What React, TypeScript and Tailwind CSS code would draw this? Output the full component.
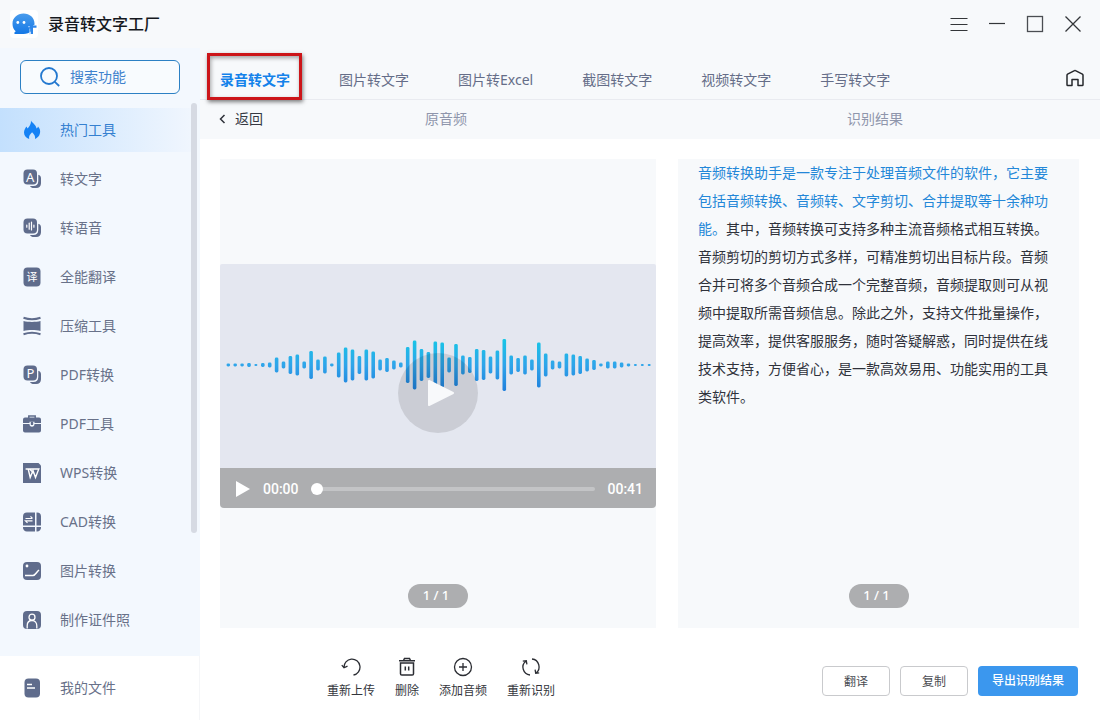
import type { ReactNode } from 'react';

const INK = '#5f6c8c';

const StackIcon = ({ children }: { children: ReactNode }) => (
  <svg width="20" height="20" viewBox="0 0 20 20" aria-hidden="true">
    <path
      d="M16.300 5.800c1.700.4 2.700 1.700 2.700 3.500v4.900c0 3-1.800 4.800-4.800 4.800h-2.400c-1.700 0-3-.7-3.800-2.100h3.300c3.200 0 5-1.800 5-5z"
      fill={INK}
    />
    <rect x="1.500" y="0.500" width="13.500" height="15" rx="4" fill={INK} />
    {children}
  </svg>
);

const FlameIcon = () => (
  <svg width="20" height="20" viewBox="0 0 20 20" aria-hidden="true">
    <path
      d="M9 .5c1 2.400 5.200 4.300 5.500 8 .8-.4 1.300-1 1.500-2C17.800 8.500 18.500 10.500 18 13c-.6 3.200-2.600 5-5 6 .7-2.800-1-5-2.900-6.800C8.200 14 6.400 16 7.200 19 4 18 2.100 15.800 2 12.600 2 9.700 3.400 8.300 4.400 6.500c.5.8.8 1.300 1 2.100C7.500 6.500 9.200 4 9 .5z"
      fill="#1582f5"
    />
  </svg>
);

const LetterAIcon = () => (
  <StackIcon>
    <text x="8.2" y="12.500" textAnchor="middle" fontSize="13" fill="#fff">A</text>
  </StackIcon>
);

const VoiceIcon = () => (
  <StackIcon>
    <path d="M4.800 7v2.200M7.200 5v6.200M9.500 4v8M11.900 7v2.200" stroke="#fff" strokeWidth="1.200" strokeLinecap="round" />
  </StackIcon>
);

const LetterPIcon = () => (
  <StackIcon>
    <text x="8.5" y="12.500" textAnchor="middle" fontSize="13" fill="#fff">P</text>
  </StackIcon>
);

const TranslateIcon = () => (
  <svg width="20" height="20" viewBox="0 0 20 20" aria-hidden="true">
    <rect x="1.500" y="0.500" width="17" height="19" rx="4" fill={INK} />
    <text x="10" y="14" textAnchor="middle" fontSize="11" fill="#fff">译</text>
  </svg>
);

const CompressIcon = () => (
  <svg width="20" height="20" viewBox="0 0 20 20" aria-hidden="true">
    <path d="M1.500 1.800c5 1.700 12 1.700 17 0M1.500 18.200c5-1.700 12-1.700 17 0" fill="none" stroke={INK} strokeWidth="2" />
    <path d="M1.500 5c5 1.200 12 1.200 17 0v10c-5-1.200-12-1.200-17 0z" fill={INK} />
  </svg>
);

const BriefcaseIcon = () => (
  <svg width="20" height="20" viewBox="0 0 20 20" aria-hidden="true">
    <path d="M6.800 4V1.900h6.400V4" fill="none" stroke={INK} strokeWidth="1.500" />
    <path d="M1 5.500a2 2 0 0 1 2-2h14a2 2 0 0 1 2 2V9h-6.500V7.800h-5V9H1z" fill={INK} />
    <path d="M1 10h6.500c0 1.800 1 2.700 2.500 2.700s2.500-.9 2.500-2.700H19v6.500a2 2 0 0 1-2 2H3a2 2 0 0 1-2-2z" fill={INK} />
    <path d="M8.800 7.800h2.400v2.400c0 1.200-2.400 1.200-2.400 0z" fill={INK} />
  </svg>
);

const WpsIcon = () => (
  <svg width="20" height="20" viewBox="0 0 20 20" aria-hidden="true">
    <path d="M1 0h15.500L19 2.500V20H1z" fill={INK} />
    <path d="M3.600 6h2.600l2 8.500L11 7.500l2.500 7L16.800 6H7.500l4.200 4" fill="none" stroke="#fff" strokeWidth="1.400" />
  </svg>
);

const CadIcon = () => (
  <svg width="20" height="20" viewBox="0 0 20 20" aria-hidden="true">
    <path d="M5 .5h8v13H1v-9a4 4 0 0 1 4-4zM14.500.5h.5a4 4 0 0 1 4 4v9h-4.500zM1 15h12v4.500H5A4 4 0 0 1 1 15zM14.500 15H19a4 4 0 0 1-4 4.500h-.5z" fill={INK} />
    <path d="M3.500 6.500h7M8.500 4.300l2 2M10.500 8.800h-7l2 2" fill="none" stroke="#fff" strokeWidth="1.200" />
  </svg>
);

const PictureIcon = () => (
  <svg width="20" height="20" viewBox="0 0 20 20" aria-hidden="true">
    <rect x="1" y="1" width="18" height="18" rx="4" fill={INK} />
    <circle cx="5" cy="5" r="1.400" fill="#fff" />
    <path d="M3 14.500h8c2.500 0 3-3 6-5.500" fill="none" stroke="#fff" strokeWidth="1.500" />
  </svg>
);

const PortraitIcon = () => (
  <svg width="20" height="20" viewBox="0 0 20 20" aria-hidden="true">
    <rect x="1" y="1" width="18" height="18" rx="4" fill={INK} />
    <circle cx="10" cy="7.200" r="3" fill="none" stroke="#fff" strokeWidth="1.300" />
    <path d="M5.200 18.500v-2.700c0-3.200 2-5.300 4.800-5.300s4.800 2.100 4.800 5.300v2.700" fill="none" stroke="#fff" strokeWidth="1.300" />
  </svg>
);

const FileIcon = () => (
  <svg width="20" height="20" viewBox="0 0 20 20" aria-hidden="true">
    <rect x="2.500" y="0.500" width="15.500" height="19" rx="4" fill={INK} />
    <path d="M5 6.500h5M5 10h8" stroke="#fff" strokeWidth="1.400" />
  </svg>
);

const Logo = () => (
  <svg width="28" height="28" viewBox="0 0 28 28" aria-hidden="true">
    <defs>
      <linearGradient id="logo" x1="0" y1="0" x2="0" y2="1">
        <stop offset="0" stopColor="#4a9cec" />
        <stop offset="1" stopColor="#1478e6" />
      </linearGradient>
    </defs>
    <rect width="28" height="28" rx="4" fill="#fff" />
    <path d="M13.500 3.500c6.200 0 11 4.300 11 10 0 6-4.500 10.500-11 10.500H5.200c-.9 0-1.300-.9-.7-1.500l1.200-1.300C3.500 19.500 2.500 16.800 2.500 13.700 2.500 7.800 7.300 3.500 13.500 3.500z" fill="url(#logo)" />
    <circle cx="7.800" cy="12.500" r="1.400" fill="#fff" />
    <circle cx="14" cy="12.500" r="1.400" fill="#fff" />
    <path d="M23.500 15H28v4h-3v6h-4.500l1-6z" fill="#fff" />
    <path d="M18 15.500h8.500v2.300H23v6.300h-2.300v-6.300H18z" fill="#2d86ea" />
    <path d="M18 16.700h2M19.800 18.500v6" stroke="#b9dafb" strokeWidth="0.800" />
  </svg>
);

const tools = [
  { label: '热门工具', icon: FlameIcon },
  { label: '转文字', icon: LetterAIcon },
  { label: '转语音', icon: VoiceIcon },
  { label: '全能翻译', icon: TranslateIcon },
  { label: '压缩工具', icon: CompressIcon },
  { label: 'PDF转换', icon: LetterPIcon },
  { label: 'PDF工具', icon: BriefcaseIcon },
  { label: 'WPS转换', icon: WpsIcon },
  { label: 'CAD转换', icon: CadIcon },
  { label: '图片转换', icon: PictureIcon },
  { label: '制作证件照', icon: PortraitIcon },
];

const tabs = ['录音转文字', '图片转文字', '图片转Excel', '截图转文字', '视频转文字', '手写转文字'];

const bars = [
  3, 3, 3, 4, 2, 4, 5, 15, 7, 18, 21, 7, 28, 11, 17, 3, 25, 35, 31, 18, 31, 27, 11, 14, 9, 5, 36, 49, 32, 26, 47,
  45, 15, 42, 19, 16, 32, 30, 17, 29, 52, 19, 14, 19, 11, 45, 23, 9, 7, 23, 21, 18, 13, 10, 3, 7, 7, 5, 3, 2, 2, 2,
];

const Waveform = () => (
  <svg className="w-full" viewBox="0 0 436 60" aria-hidden="true">
    <defs>
      <linearGradient id="wave" gradientUnits="userSpaceOnUse" x1="0" y1="4" x2="0" y2="56">
        <stop offset="0" stopColor="#16c6e6" />
        <stop offset="0.5" stopColor="#2fa5ea" />
        <stop offset="1" stopColor="#1f7fdc" />
      </linearGradient>
    </defs>
    {bars.map((h, i) => {
      const w = Math.min(h + 1, 3.6);
      return <rect key={i} x={8.3 + i * 6.9 - w / 2} y={30 - h / 2} width={w} height={h} rx={w / 2.5} fill="url(#wave)" />;
    })}
  </svg>
);

const Sidebar = () => (
  <aside className="flex w-[200px] shrink-0 flex-col bg-[#f3f8fe]">
    <div className="px-5 pt-3">
      <label className="flex h-[34px] items-center gap-2.5 rounded-md border border-[#2c80c4] bg-[#f8fbfe] pl-[19px]">
        <svg className="shrink-0" width="20" height="20" viewBox="0 0 20 20" fill="none" stroke="#2478cf" strokeWidth="1.800" aria-hidden="true">
          <circle cx="9" cy="9" r="8" />
          <path d="M14.800 14.800l4.400 4.200" />
        </svg>
        <input
          type="text"
          aria-label="搜索功能"
          placeholder="搜索功能"
          className="w-full min-w-0 bg-transparent text-sm outline-none placeholder:text-[#3f82cd]"
        />
      </label>
    </div>

    <nav className="flex flex-1">
      <ul className="flex flex-1 flex-col gap-[5px] py-3.5">
        {tools.map(({ label, icon: Icon }, i) => (
          <li key={label}>
            <a
              href="#"
              className={`flex h-11 items-center gap-[18px] pl-[22px] text-sm ${
                i === 0 ? 'bg-linear-to-r from-[#c3e0fd] to-[#f0f6fe] text-[#3580d0]' : 'text-[#687189]'
              }`}
            >
              <Icon />
              <span>{label}</span>
            </a>
          </li>
        ))}
      </ul>
      <div className="w-[9px] pt-[9px]">
        <div className="h-[430px] w-1.5 rounded-full bg-[#d6dae3]" />
      </div>
    </nav>

    <a href="#" className="flex h-16 items-center gap-[18px] border-r border-[#f5f6f8] bg-white pl-[22px] text-sm text-[#687189]">
      <FileIcon />
      <span>我的文件</span>
    </a>
  </aside>
);

const TitleBar = () => (
  <header className="flex h-12 items-center pr-[17px] pl-2.5">
    <Logo />
    <h1 className="ml-2.5 text-base font-medium text-[#15181e]">录音转文字工厂</h1>
    <div className="ml-auto flex gap-[18px]">
      <button type="button" aria-label="菜单">
        <svg width="20" height="20" viewBox="0 0 20 20" stroke="#333639" strokeWidth="1.200" aria-hidden="true">
          <path d="M1.500 4.500h17M1.500 10.500h17M1.500 16.500h17" />
        </svg>
      </button>
      <button type="button" aria-label="最小化">
        <svg width="20" height="20" viewBox="0 0 20 20" stroke="#333639" strokeWidth="1.200" aria-hidden="true">
          <path d="M2 9.500h16" />
        </svg>
      </button>
      <button type="button" aria-label="最大化">
        <svg width="20" height="20" viewBox="0 0 20 20" fill="none" stroke="#4a4d52" strokeWidth="1.300" aria-hidden="true">
          <rect x="2.500" y="2.500" width="15" height="15" />
        </svg>
      </button>
      <button type="button" aria-label="关闭">
        <svg width="20" height="20" viewBox="0 0 20 20" stroke="#333639" strokeWidth="1.300" aria-hidden="true">
          <path d="M2.500 2.500l15 15M17.500 2.500l-15 15" />
        </svg>
      </button>
    </div>
  </header>
);

const TabBar = () => (
  <nav className="flex h-[52px] items-center border-b border-[#e9ebf0] pt-3 pr-4 pl-5">
    <ul className="flex gap-[49px] text-sm text-[#656d88]">
      {tabs.map((tab, i) => (
        <li key={tab} className="relative whitespace-nowrap">
          <a href="#" className={i === 0 ? 'font-bold text-[#1482ea]' : ''}>{tab}</a>
          {i === 0 && (
            <span className="pointer-events-none absolute -top-[17px] -right-3 -bottom-2.5 -left-[13px] border-3 border-[#cc1519] shadow-[1px_2px_4px_rgba(0,0,0,0.5),inset_1px_2px_4px_rgba(0,0,0,0.35)]" />
          )}
        </li>
      ))}
    </ul>
    <button type="button" aria-label="首页" className="ml-auto pb-1">
      <svg width="18" height="18" viewBox="0 0 18 18" fill="none" stroke="#26282c" strokeWidth="1.500" strokeLinejoin="round" aria-hidden="true">
        <path d="M1 6.200Q1 5.600 1.600 5.200L8.500 1.700Q9 1.400 9.500 1.700L16.400 5.200Q17 5.600 17 6.200V15.700Q17 16.500 16.200 16.500H12V10.500H6V16.500H1.800Q1 16.500 1 15.700z" />
      </svg>
    </button>
  </nav>
);

const PageBadge = () => (
  <span className="absolute bottom-5 left-1/2 flex h-6 w-[60px] -translate-x-1/2 items-center justify-center rounded-full bg-[#adaeb0] pr-1 font-['Noto_Sans'] text-[13px] font-medium text-white">
    1 / 1
  </span>
);

const Player = () => (
  <section aria-label="原音频" className="relative flex flex-col justify-center bg-[#f7f9fb] pb-[15px]">
    <div className="flex h-[204px] items-center rounded-t-xs bg-[#e4e7f0] pb-0.5">
      <Waveform />
    </div>
    <div className="flex h-10 items-center gap-3 rounded-b-sm bg-[#adaeb0] pt-0.5 pr-[13px] pl-[15px] font-[Roboto] text-sm font-medium text-white">
      <button type="button" aria-label="播放">
        <svg width="16" height="16" viewBox="0 0 16 16" fill="#fff" aria-hidden="true">
          <path d="M1 0l14 8-14 8z" />
        </svg>
      </button>
      <span>00:00</span>
      <input
        type="range"
        aria-label="播放进度"
        min={0}
        max={41}
        defaultValue={0}
        className="h-1 min-w-0 flex-1 appearance-none rounded-full bg-[#c3c4c6] [&::-webkit-slider-thumb]:size-3 [&::-webkit-slider-thumb]:appearance-none [&::-webkit-slider-thumb]:rounded-full [&::-webkit-slider-thumb]:bg-white"
      />
      <span>00:41</span>
    </div>
    <div className="pointer-events-none absolute inset-0 flex items-center justify-center pb-0.5">
      <button type="button" aria-label="播放音频" className="pointer-events-auto flex size-20 items-center justify-center rounded-full bg-black/11 pl-1.5">
        <svg width="28" height="28" viewBox="0 0 28 28" fill="#f8f9fb" stroke="#f8f9fb" strokeWidth="2" strokeLinejoin="round" aria-hidden="true">
          <path d="M2 2l24 12L2 26z" />
        </svg>
      </button>
    </div>
    <PageBadge />
  </section>
);

const Result = () => (
  <section aria-label="识别结果" className="relative bg-[#f7f9fb] px-5 pb-14">
    <p className="text-sm leading-7 text-[#2f323b]">
      <span className="text-[#2387d8]">
        音频转换助手是一款专注于处理音频文件的软件，它主要包括音频转换、音频转、文字剪切、合并提取等十余种功能。
      </span>
      其中，音频转换可支持多种主流音频格式相互转换。音频剪切的剪切方式多样，可精准剪切出目标片段。音频合并可将多个音频合成一个完整音频，音频提取则可从视频中提取所需音频信息。除此之外，支持文件批量操作，提高效率，提供客服服务，随时答疑解惑，同时提供在线技术支持，方便省心，是一款高效易用、功能实用的工具类软件。
    </p>
    <PageBadge />
  </section>
);

const actions = [
  {
    label: '重新上传',
    icon: <path d="M3 10.500A8 8 0 1 1 12.500 18M.8 8.200L3 10.800l3.500-1.600" />,
  },
  {
    label: '删除',
    icon: <path d="M2 3.700h16M6.500 3.500l1-2h5l1 2M3.500 6v10.700q0 1.300 1.300 1.300h10.400q1.300 0 1.300-1.300V6zM8.300 9.500v4M11.700 9.500v4" strokeWidth="1.500" />,
  },
  {
    label: '添加音频',
    icon: <path d="M10 1.500a8.500 8.500 0 1 0 0 17 8.500 8.500 0 0 0 0-17zM10 6v8M6 10h8" />,
  },
  {
    label: '重新识别',
    icon: <path d="M9 18A7.900 7.900 0 0 1 5 3.900M1.800 4.200l3.500-.5.600 3.600M11 2A7.900 7.900 0 0 1 15 16.100M18.200 15.800l-3.500.5-.6-3.600" />,
  },
];

const App = () => {
  return (
    <div className="flex min-h-screen flex-col bg-[#f7f9fb] font-['Noto_Sans','Noto_Sans_CJK_SC',sans-serif]">
      <TitleBar />
      <div className="flex flex-1">
        <Sidebar />
        <main className="flex min-w-0 flex-1 flex-col">
          <TabBar />
          <div className="grid h-[39px] grid-cols-2 items-center pb-0.5 text-sm text-[#8f96ac]">
            <div className="flex items-center pr-[21px] pl-[18px]">
              <button type="button" className="flex items-center gap-2 text-[#363943]">
                <svg width="9" height="10" viewBox="0 0 9 10" fill="none" stroke="#2e313a" strokeWidth="1.500" aria-hidden="true">
                  <path d="M6.500 1L2.500 5l4 4" />
                </svg>
                返回
              </button>
              <h2 className="flex-1 text-center">原音频</h2>
            </div>
            <h2 className="text-center">识别结果</h2>
          </div>

          <div className="flex flex-1 flex-col bg-white pt-5 pr-[21px] pl-5">
            <div className="grid flex-1 grid-cols-[436fr_401fr] gap-[22px]">
              <Player />
              <Result />
            </div>
            <footer className="grid h-[92px] grid-cols-[436fr_401fr] gap-[22px] pt-[29px]">
              <div className="flex items-start justify-center gap-5 pl-1.5">
                {actions.map((action) => (
                  <button key={action.label} type="button" className="flex flex-col items-center gap-1.5 text-xs text-[#34363c]">
                    <svg width="20" height="20" viewBox="0 0 20 20" fill="none" stroke="#2b2d33" strokeWidth="1.300" aria-hidden="true">
                      {action.icon}
                    </svg>
                    {action.label}
                  </button>
                ))}
              </div>
              <div className="flex items-start justify-end gap-2.5 pt-[9px] pr-px text-xs">
                <button type="button" className="h-[30px] w-[68px] rounded-sm border border-[#c9cacd] bg-white pt-0.5 text-[#4a4c52]">翻译</button>
                <button type="button" className="h-[30px] w-[68px] rounded-sm border border-[#c9cacd] bg-white pt-0.5 text-[#4a4c52]">复制</button>
                <button type="button" className="h-[30px] w-[100px] rounded-sm bg-[#3b97ee] font-medium text-white">导出识别结果</button>
              </div>
            </footer>
          </div>
        </main>
      </div>
    </div>
  );
};

export default App;
